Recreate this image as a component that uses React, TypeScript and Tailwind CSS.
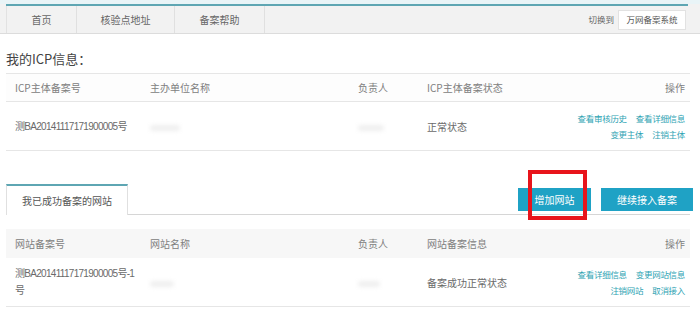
import React from 'react';

const FONT = '"Microsoft YaHei", "Noto Sans CJK SC", "Liberation Sans", sans-serif';
const NUM_FONT = '"Liberation Sans", "Noto Sans CJK SC", sans-serif';

const navTabs = [
  { label: '首页', w: 'w-[70px]' },
  { label: '核验点地址', w: 'w-[98px]' },
  { label: '备案帮助', w: 'w-[90px]' },
];

// faint blurred blob where a name was masked out
const Masked = ({ w }: { w: string }) => (
  <span className={`inline-block h-[6px] ${w} rounded-full bg-[#efefef] blur-[2px]`} />
);

const Links = ({ top, bottom }: { top: string[]; bottom: string[] }) => (
  <div className="flex flex-col items-end gap-[5px] text-[8.5px] leading-[11px] tracking-[-0.3px] text-[#2ea3b3]">
    <div className="flex gap-[9px]">
      {top.map((t) => (
        <a key={t} className="cursor-pointer">{t}</a>
      ))}
    </div>
    <div className="flex gap-[9px]">
      {bottom.map((t) => (
        <a key={t} className="cursor-pointer">{t}</a>
      ))}
    </div>
  </div>
);

const cols = 'grid grid-cols-[135px_208px_69px_1fr_auto] items-center';

export default function App() {
  return (
    <div className="w-[700px] h-[312px] overflow-hidden bg-white relative" style={{ fontFamily: FONT }}>
      {/* top nav */}
      <div className="h-[4px] bg-[#e9f4f7]" />
      <div className="h-[30px] bg-[#f2f2f2] border-b border-[#dcdcdc] pl-[6px] pr-[12px]">
        <div className="h-full border-t-2 border-[#5ea6b3] flex items-stretch">
          <div className="flex border-l border-[#e2e2e2]">
            {navTabs.map((t) => (
              <div
                key={t.label}
                className={`${t.w} flex items-center justify-center border-r border-[#e0e0e0] text-[10px] text-[#666]`}
              >
                {t.label}
              </div>
            ))}
          </div>
          <div className="ml-auto flex items-center gap-[4px] pr-[2px]">
            <span className="text-[8.5px] text-[#666]">切换到</span>
            <span className="h-[20px] w-[68px] flex items-center justify-center bg-white border border-[#e2e2e2] text-[8.5px] text-[#555]">
              万网备案系统
            </span>
          </div>
        </div>
      </div>

      <div className="px-[6px] pr-[10px]">
        <div className="h-[39px] flex items-center pt-[10px] text-[13px] text-[#444]">我的ICP信息：</div>

        {/* ICP table */}
        <div className="border-t border-[#e6e6e6]">
          <div className={`${cols} h-[28px] border-b border-[#e6e6e6] text-[10px] text-[#808080] bg-[#fdfdfd]`}>
            <span className="pl-[9px]">ICP主体备案号</span>
            <span className="pl-[9px]">主办单位名称</span>
            <span className="pl-[9px]">负责人</span>
            <span className="pl-[9px]">ICP主体备案状态</span>
            <span className="pr-[5px] text-right">操作</span>
          </div>
          <div className={`${cols} h-[49px] border-b border-[#e6e6e6] text-[10px] text-[#6a6a6a]`}>
            <span className="pl-[9px] text-[10px] tracking-[-0.7px]" style={{ fontFamily: NUM_FONT }}>
              测BA20141117171900005号
            </span>
            <span className="pl-[9px]"><Masked w="w-[30px]" /></span>
            <span className="pl-[9px]"><Masked w="w-[26px]" /></span>
            <span className="pl-[9px]">正常状态</span>
            <div className="pr-[5px]">
              <Links top={['查看审核历史', '查看详细信息']} bottom={['变更主体', '注销主体']} />
            </div>
          </div>
        </div>

        {/* websites tab bar */}
        <div className="mt-[33px] flex items-end border-b border-[#d6d6d6] h-[31px]">
          <div className="w-[122px] h-[31px] -mb-px bg-white border-t-2 border-x border-[#5ea6b3] border-x-[#e0e0e0] flex items-center justify-center text-[10px] text-[#555]">
            我已成功备案的网站
          </div>
          <div className="ml-auto flex gap-[10px] mb-[3px] -mr-[3px]">
            <button className="w-[73px] h-[23px] bg-[#1fa2c5] text-white text-[10px]">增加网站</button>
            <button className="w-[92px] h-[23px] bg-[#1fa2c5] text-white text-[10px]">继续接入备案</button>
          </div>
        </div>

        {/* websites table */}
        <div className="mt-[14px]">
          <div className={`${cols} h-[29px] bg-[#f7f7f7] text-[10px] text-[#808080]`}>
            <span className="pl-[9px]">网站备案号</span>
            <span className="pl-[9px]">网站名称</span>
            <span className="pl-[9px]">负责人</span>
            <span className="pl-[9px]">网站备案信息</span>
            <span className="pr-[5px] text-right">操作</span>
          </div>
          <div className={`${cols} h-[49px] border-b border-[#e6e6e6] text-[10px] text-[#6a6a6a]`}>
            <span
              className="pl-[9px] pr-[4px] text-[10px] leading-[17px] tracking-[-0.7px] break-all"
              style={{ fontFamily: NUM_FONT }}
            >
              测BA20141117171900005号-1号
            </span>
            <span className="pl-[9px]"><Masked w="w-[24px]" /></span>
            <span className="pl-[9px]"><Masked w="w-[22px]" /></span>
            <span className="pl-[9px]">备案成功正常状态</span>
            <div className="pr-[5px]">
              <Links top={['查看详细信息', '变更网站信息']} bottom={['注销网站', '取消接入']} />
            </div>
          </div>
        </div>
      </div>

      {/* red highlight annotation */}
      <div className="absolute left-[528px] top-[170px] w-[59px] h-[50px] border-4 border-[#e8141b]" />
    </div>
  );
}
